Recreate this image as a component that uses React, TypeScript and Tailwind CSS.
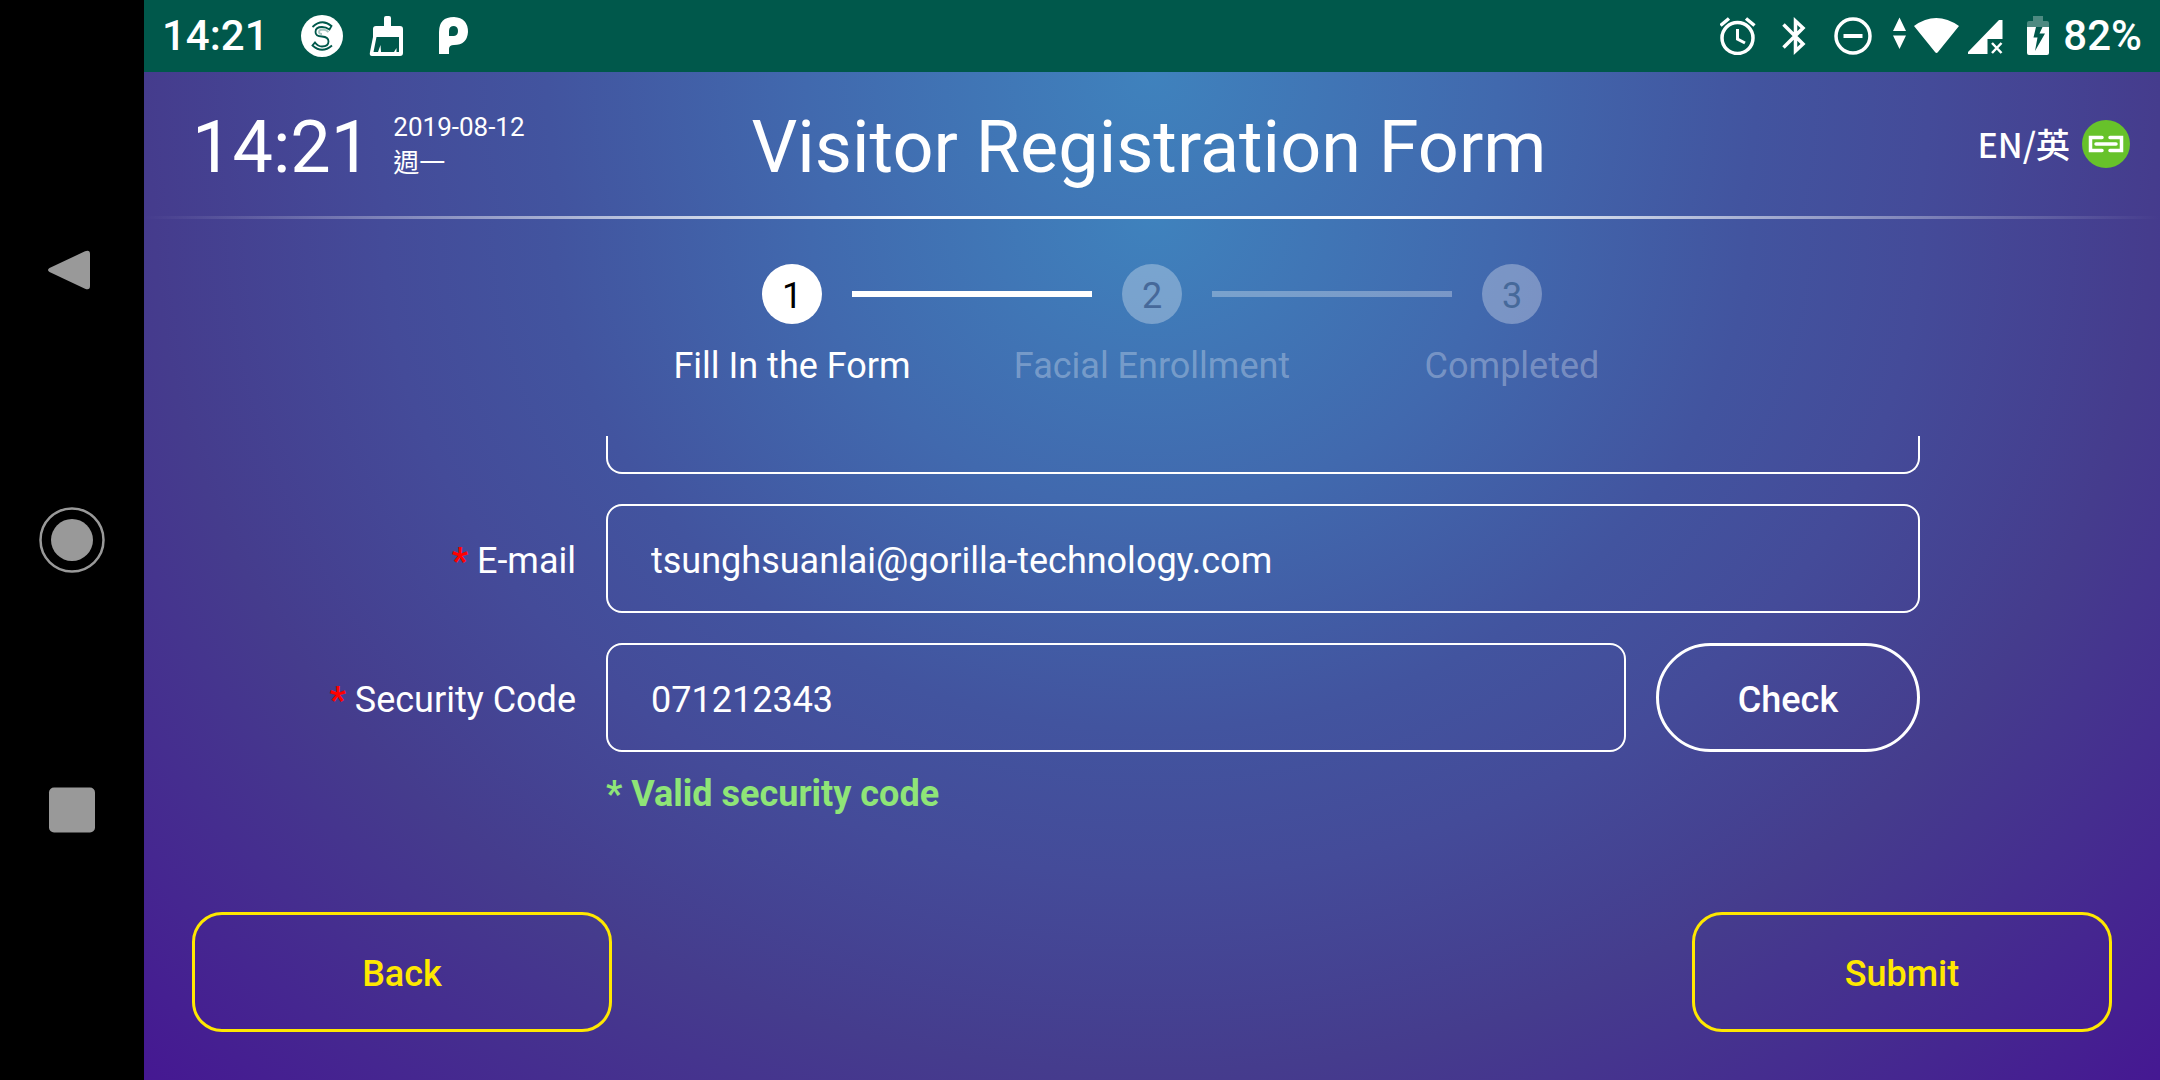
import { useState, type ReactNode } from "react";

function NavRail() {
  return (
    <nav aria-label="System navigation" className="flex w-36 shrink-0 flex-col items-center justify-around bg-black py-[12.5vh] text-[#999999]">
      <button aria-label="Back" className="p-2">
        <svg width="66" height="66" viewBox="0 0 66 66" fill="currentColor" className="block">
          <path d="M10.500 31 L46 14.300 Q51 12.500 51 17 V49 Q51 53.500 46 51.700 L10.500 35 Q7.500 33 10.500 31Z" />
        </svg>
      </button>
      <button aria-label="Home" className="p-2">
        <svg width="66" height="66" viewBox="0 0 66 66" className="block">
          <circle cx="33" cy="33" r="31.500" fill="none" stroke="currentColor" strokeWidth="2.500" />
          <circle cx="33" cy="33" r="21" fill="currentColor" />
        </svg>
      </button>
      <button aria-label="Recent apps" className="p-2">
        <svg width="66" height="66" viewBox="0 0 66 66" fill="currentColor" className="block">
          <rect x="10" y="10.500" width="46" height="45" rx="5" />
        </svg>
      </button>
    </nav>
  );
}

function StatusBar() {
  return (
    <div className="flex h-18 items-center bg-[#00584b] px-[18px] text-[42px] leading-none font-medium">
      <span>14:21</span>
      <svg width="42" height="42" viewBox="0 0 42 42" className="ml-8" aria-hidden="true">
        <circle cx="21" cy="21" r="21" fill="white" />
        <g fill="none" stroke="#00584b" strokeWidth="1.800">
          <path d="M11.500 12 Q21 3 30.500 11 L28.500 14.500 Q25 12 21 12 C16 12 14.500 14.500 14.500 17 C14.500 20.500 17.500 21.500 21 21.500 C25 21.800 27.500 23.500 27.500 26.500 C27.500 30 25 31.500 21 31.500 Q17 31.500 14 27.500 L11.500 30.500 Q21 39 31 30.500" />
          <path d="M27.500 17 Q25 14.500 21.500 14.500 Q18 14.700 18 17 Q18 19 21 19" opacity="0.35" />
        </g>
      </svg>
      <svg width="34" height="42" viewBox="0 0 34 42" className="ml-[26px]" aria-hidden="true">
        <path d="M15 3 Q15 1 17 1 H20 Q22 1 22 3 V11 H31 Q34 11 34 14 V38 Q34 41 31 41 H3 Q0 41 1 37 L4 22 V14 Q4 11 7 11 H15Z" fill="white" />
        <path d="M7.500 22 H30 V37 H27.500 V33 L25 37 H12 L11.500 30 L9 37 H4.500Z" fill="#00584b" />
      </svg>
      <svg width="30" height="38" viewBox="0 0 30 38" className="ml-9" aria-hidden="true">
        <path d="M0 15 Q0 0 15 0 Q29 1 29 15 Q28 28 15 28 Q10 28 10 32 V37 H0Z M15 9 Q10 9 10 14 V19 H15 Q19 18.500 19 14 Q19 9.500 15 9Z" fill="white" fillRule="evenodd" />
      </svg>

      <div className="ml-auto flex items-center">
        <svg width="36" height="38" viewBox="0 0 36 38" aria-label="Alarm" fill="none" stroke="white">
          <circle cx="17.500" cy="21" r="15.500" strokeWidth="3.500" />
          <path d="M17.500 12 V22 L25 26" strokeWidth="3" />
          <path d="M0.500 8.500 L9 1.500 M34.500 8.500 L26 1.500" strokeWidth="3.500" />
        </svg>
        <svg width="24" height="38" viewBox="0 0 24 38" className="ml-[26px]" aria-label="Bluetooth" fill="none" stroke="white" strokeWidth="3.500">
          <path d="M1.500 7.500 L21 27 L13.500 34 V4 L21 11 L1.500 30.500" />
        </svg>
        <svg width="38" height="38" viewBox="0 0 38 38" className="ml-7" aria-label="Do not disturb" fill="none" stroke="white">
          <circle cx="19" cy="19" r="17" strokeWidth="3.500" />
          <path d="M9.500 19 H28.500" strokeWidth="4" />
        </svg>
        <svg width="68" height="38" viewBox="0 0 68 38" className="ml-5" aria-label="Wi-Fi" fill="white">
          <path d="M1 14 L7.500 0.500 L14 14Z M1 18.500 H14 L7.500 32Z" />
          <path d="M22 9 Q44 -7 67 9 L46 35 Q44.500 37 43 35Z" />
        </svg>
        <svg width="35" height="38" viewBox="0 0 35 38" className="ml-2" aria-label="No mobile signal" fill="white">
          <path d="M0 37 V35 L31 3 H34.500 V22 H19.500 V37Z" />
          <path d="M24 26 L33.500 36 M33.500 26 L24 36" stroke="white" strokeWidth="2.500" />
        </svg>
        <svg width="22" height="40" viewBox="0 0 22 40" className="ml-6" aria-label="Battery charging" fill="white">
          <path d="M6 0 H16 V5 H20 Q22 5 22 7 V11 H0 V7 Q0 5 2 5 H6Z" opacity="0.3" />
          <path fillRule="evenodd" d="M0 11 H9 L6.500 21.500 H10.500 L8 35 L18 17.500 H12.500 L15.500 11 H22 V37 Q22 39 20 39 H2 Q0 39 0 37Z" />
        </svg>
        <span className="ml-3.5">82%</span>
      </div>
    </div>
  );
}

function Header() {
  return (
    <header className="grid h-36 grid-cols-[1fr_auto_1fr] items-center bg-[radial-gradient(circle_1440px_at_top,#3f82bd_0%,#4169ae_24%,#42549f_42%,#444b99_54%,#453c8d_70%,#451892_100%)]">
      <div className="flex items-center gap-[22px] pl-12">
        <time className="pt-2 text-[72px] leading-none">14:21</time>
        <div className="pt-0.5 text-[26px] leading-9">
          <p>2019-08-12</p>
          <p>週一</p>
        </div>
      </div>
      <h1 className="pt-2 pr-1.5 text-[72px] leading-none">Visitor Registration Form</h1>
      <div className="flex items-center justify-end gap-3 pr-[30px]">
        <button className="font-['Noto_Sans_CJK_TC',sans-serif] text-[34px] leading-none font-medium">EN/英</button>
        <svg width="48" height="48" viewBox="0 0 48 48" role="img" aria-label="Connected">
          <circle cx="24" cy="24" r="24" fill="#67c22a" />
          <path d="M20 17.500 H8.500 V30.500 H20 M28 17.500 H39.500 V30.500 H28 M14 24 H34" fill="none" stroke="white" strokeWidth="3.500" strokeLinecap="round" />
        </svg>
      </div>
    </header>
  );
}

const steps = [
  { label: "Fill In the Form", active: true },
  { label: "Facial Enrollment", active: false },
  { label: "Completed", active: false },
];

function Steps() {
  return (
    <ol className="mx-auto flex w-[1080px] pt-[45px] text-[36px]">
      {steps.map((step, i) => (
        <li key={step.label} className="relative flex flex-1 flex-col items-center" aria-current={step.active ? "step" : undefined}>
          {i < steps.length - 1 && (
            <span className={`absolute top-[27px] left-[240px] h-1.5 w-60 ${step.active ? "bg-white" : "bg-white/30"}`} />
          )}
          <span className={`flex size-15 items-center justify-center rounded-full pt-1 leading-none ${step.active ? "bg-white text-black" : "bg-white/30 text-[#46699a]"}`}>
            {i + 1}
          </span>
          <span className={`mt-4 leading-13 ${step.active ? "text-white" : "text-white/30"}`}>{step.label}</span>
        </li>
      ))}
    </ol>
  );
}

function Label({ htmlFor, children }: { htmlFor: string; children: ReactNode }) {
  return (
    <label htmlFor={htmlFor} className="pt-1 text-right text-[36px]">
      <span className="font-bold text-[#ff0000]">*</span> {children}
    </label>
  );
}

function Field({ id, type, value, onChange }: { id: string; type: string; value: string; onChange: (v: string) => void }) {
  return (
    <input
      id={id}
      type={type}
      value={value}
      onChange={(e) => onChange(e.target.value)}
      className="h-[109px] w-full min-w-0 rounded-2xl border-2 border-white bg-transparent px-[43px] pt-1 text-[36px] text-white outline-none"
    />
  );
}

export default function App() {
  const [email, setEmail] = useState("tsunghsuanlai@gorilla-technology.com");
  const [code, setCode] = useState("071212343");

  return (
    <div className="flex min-h-screen font-[Roboto,'Noto_Sans_CJK_TC',sans-serif] text-white">
      <NavRail />
      <div className="flex min-w-0 flex-1 flex-col">
        <StatusBar />
        <Header />
        <main className="flex flex-1 flex-col bg-[radial-gradient(ellipse_farthest-corner_at_top,#3f82bd_0%,#4169ae_24%,#42549f_42%,#444b99_54%,#453c8d_70%,#451892_100%)]">
          <div className="h-[3px] bg-[linear-gradient(to_right,transparent,white_38%,white_62%,transparent)]" />
          <Steps />
          <form className="flex flex-1 flex-col" onSubmit={(e) => e.preventDefault()}>
            <div className="mt-11 grid grid-cols-[432px_1fr] gap-[30px] pr-60">
              <div className="col-start-2 h-[38px] rounded-b-2xl border-2 border-t-0 border-white" />
              <div className="col-span-2 grid grid-cols-subgrid items-center">
                <Label htmlFor="email">E-mail</Label>
                <Field id="email" type="email" value={email} onChange={setEmail} />
              </div>
              <div className="col-span-2 grid grid-cols-subgrid items-center">
                <Label htmlFor="code">Security Code</Label>
                <div className="flex gap-[30px]">
                  <Field id="code" type="text" value={code} onChange={setCode} />
                  <button type="button" className="w-66 shrink-0 rounded-full border-3 border-white pt-1 text-[36px] font-medium">
                    Check
                  </button>
                </div>
              </div>
            </div>
            <p role="status" className="mt-4 ml-[462px] text-[36px] leading-13 font-bold text-[#8fe577]">
              * Valid security code
            </p>
            <div className="mt-auto flex justify-between px-12 pb-12 text-[36px] font-medium text-[#ffe800]">
              <button type="button" className="h-30 w-105 rounded-[30px] border-3 border-[#ffe800] pt-1">
                Back
              </button>
              <button type="submit" className="h-30 w-105 rounded-[30px] border-3 border-[#ffe800] pt-1">
                Submit
              </button>
            </div>
          </form>
        </main>
      </div>
    </div>
  );
}
